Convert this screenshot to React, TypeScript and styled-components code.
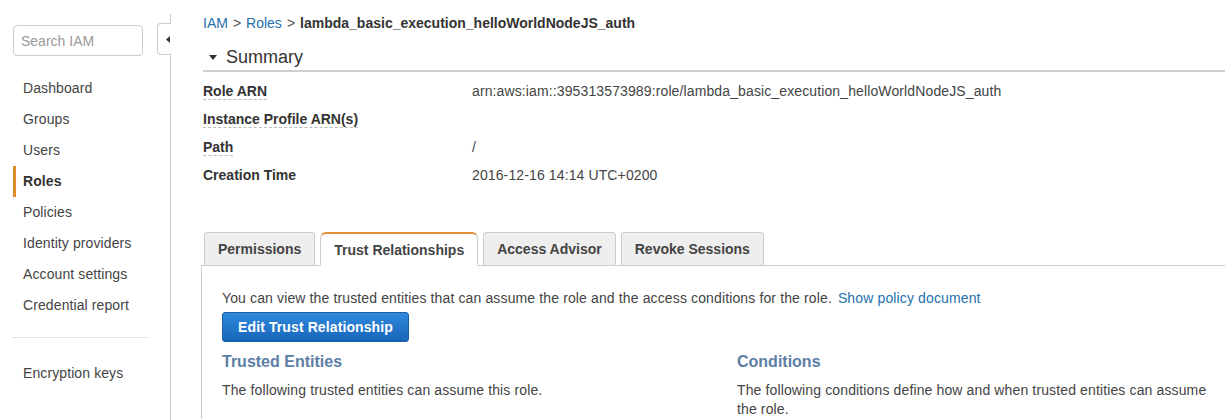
import React from "react";
import styled, { createGlobalStyle } from "styled-components";

const Global = createGlobalStyle`
  html, body { margin: 0; padding: 0; background: #fff; }
  body { font-family: "Liberation Sans", Arial, sans-serif; color: #444; overflow: hidden; }
  * { box-sizing: border-box; }
`;

const Page = styled.div`
  display: flex;
  width: 1225px;
  height: 420px;
  overflow: hidden;
`;

const Sidebar = styled.aside`
  position: relative;
  width: 171px;
  flex: none;
  margin-top: 14px;
  border-right: 1px solid #ccc;
  padding: 11px 0 0 13px;
`;

const Collapse = styled.div`
  position: absolute;
  right: -1px;
  top: 9px;
  width: 14px;
  height: 32px;
  background: #fff;
  border: 1px solid #ccc;
  border-right: none;
  border-radius: 4px 0 0 4px;
  display: flex;
  align-items: center;
  justify-content: flex-end;
  padding-right: 1px;
`;

const Search = styled.input`
  display: block;
  width: 130px;
  height: 31px;
  border: 1px solid #ccc;
  border-radius: 4px;
  padding: 0 7px;
  font-family: "Liberation Sans", Arial, sans-serif;
  font-size: 14px;
  color: #444;
  outline: none;
  &::placeholder { color: #999; }
`;

const NavList = styled.nav`
  display: flex;
  flex-direction: column;
  margin-top: 17px;
`;

const NavItem = styled.div<{ $active?: boolean }>`
  height: 31px;
  line-height: 31px;
  font-size: 14px;
  letter-spacing: 0.1px;
  display: flex;
  align-items: center;
  padding-left: ${(p) => (p.$active ? "7px" : "10px")};
  color: ${(p) => (p.$active ? "#333" : "#444")};
  font-weight: ${(p) => (p.$active ? "bold" : "normal")};
  border-left: ${(p) => (p.$active ? "3px solid #dd8b2b" : "none")};
`;

const ActiveMark = styled.span`
  display: block;
  line-height: 24px;
  margin-top: -1px;
`;

const Separator = styled.hr`
  width: 135px;
  margin: 16px 0 20px 0;
  border: none;
  border-top: 1px dotted #c4c4c4;
`;

const Main = styled.main`
  flex: 1;
  min-width: 0;
  padding: 15px 0 0 32px;
`;

const Breadcrumb = styled.div`
  font-size: 14px;
  line-height: 16px;
  color: #555;
  display: flex;
  gap: 5px;
`;

const Crumb = styled.span`
  color: #2471ad;
`;

const CrumbCurrent = styled.span`
  color: #333;
  font-weight: bold;
`;

const SummaryHead = styled.div`
  margin-top: 16px;
  height: 25px;
  border-bottom: 2px solid #cfcfcf;
  display: flex;
  align-items: center;
  gap: 9px;
  padding-left: 6px;
  padding-bottom: 2px;
  font-size: 18px;
  color: #333;
`;

const Rows = styled.div`
  margin-top: 5px;
  display: flex;
  flex-direction: column;
`;

const Row = styled.div`
  display: grid;
  grid-template-columns: 269px 1fr;
  height: 28px;
  align-items: center;
  font-size: 14px;
`;

const Label = styled.span<{ $plain?: boolean }>`
  justify-self: start;
  font-weight: bold;
  color: #333;
  line-height: 16px;
  border-bottom: ${(p) => (p.$plain ? "1px solid transparent" : "1px dashed #bbb")};
`;

const Value = styled.span`
  color: #444;
  letter-spacing: 0.12px;
`;

const Tabs = styled.div`
  margin-top: 43px;
  display: flex;
  gap: 5px;
  padding-left: 1px;
  position: relative;
  z-index: 1;
  margin-bottom: -1px;
`;

const Tab = styled.div<{ $active?: boolean }>`
  height: 34px;
  padding: 0 13px;
  display: flex;
  align-items: center;
  font-size: 14px;
  font-weight: bold;
  color: #444;
  background: ${(p) => (p.$active ? "#fff" : "#eeeeee")};
  border: 1px solid #ccc;
  border-top: ${(p) => (p.$active ? "2px solid #e0913a" : "1px solid #ccc")};
  border-bottom: ${(p) => (p.$active ? "1px solid #fff" : "1px solid #ccc")};
  border-radius: ${(p) => (p.$active ? "6px 6px 0 0" : "3px 3px 0 0")};
`;

const Panel = styled.section`
  margin-left: -2px;
  border-top: 1px solid #ccc;
  border-left: 1px solid #ccc;
  padding: 23px 0 0 20px;
  font-size: 14px;
  color: #444;
  letter-spacing: 0.13px;
`;

const Intro = styled.p`
  margin: 0;
  line-height: 18px;
`;

const Link = styled.a`
  color: #2471ad;
  text-decoration: none;
  margin-left: 6px;
`;

const Button = styled.button`
  margin-top: 5px;
  height: 30px;
  width: 187px;
  border: 1px solid #1b5fa6;
  border-radius: 3px;
  background: linear-gradient(#3189db, #1766bc);
  color: #fff;
  font-family: "Liberation Sans", Arial, sans-serif;
  font-size: 14px;
  font-weight: bold;
  padding: 0;
  letter-spacing: 0.1px;
`;

const Columns = styled.div`
  margin-top: 10px;
  display: grid;
  grid-template-columns: 515px 478px;
`;

const Column = styled.div``;

const ColTitle = styled.h3`
  margin: 0;
  font-size: 16px;
  line-height: 20px;
  font-weight: bold;
  color: #5c7ea6;
  letter-spacing: 0;
`;

const ColText = styled.p`
  margin: 9px 0 0;
  line-height: 19px;
`;

const CaretLeft = () => (
  <svg width="4" height="7" viewBox="0 0 4 7">
    <polygon points="4,0 4,7 0,3.5" fill="#333" />
  </svg>
);

const CaretDown = () => (
  <svg width="8" height="5" viewBox="0 0 8 5">
    <polygon points="0,0 8,0 4,5" fill="#333" />
  </svg>
);

const nav = [
  "Dashboard",
  "Groups",
  "Users",
  "Roles",
  "Policies",
  "Identity providers",
  "Account settings",
  "Credential report",
];

export default function App() {
  return (
    <>
      <Global />
      <Page>
        <Sidebar>
          <Collapse>
            <CaretLeft />
          </Collapse>
          <Search placeholder="Search IAM" />
          <NavList>
            {nav.map((n) =>
              n === "Roles" ? (
                <NavItem key={n} $active>
                  <ActiveMark>{n}</ActiveMark>
                </NavItem>
              ) : (
                <NavItem key={n}>{n}</NavItem>
              )
            )}
          </NavList>
          <Separator />
          <NavItem>Encryption keys</NavItem>
        </Sidebar>
        <Main>
          <Breadcrumb>
            <Crumb>IAM</Crumb>
            <span>&gt;</span>
            <Crumb>Roles</Crumb>
            <span>&gt;</span>
            <CrumbCurrent>lambda_basic_execution_helloWorldNodeJS_auth</CrumbCurrent>
          </Breadcrumb>
          <SummaryHead>
            <CaretDown />
            <span>Summary</span>
          </SummaryHead>
          <Rows>
            <Row>
              <Label>Role ARN</Label>
              <Value>arn:aws:iam::395313573989:role/lambda_basic_execution_helloWorldNodeJS_auth</Value>
            </Row>
            <Row>
              <Label>Instance Profile ARN(s)</Label>
              <Value />
            </Row>
            <Row>
              <Label>Path</Label>
              <Value>/</Value>
            </Row>
            <Row>
              <Label $plain>Creation Time</Label>
              <Value>2016-12-16 14:14 UTC+0200</Value>
            </Row>
          </Rows>
          <Tabs>
            <Tab>Permissions</Tab>
            <Tab $active>Trust Relationships</Tab>
            <Tab>Access Advisor</Tab>
            <Tab>Revoke Sessions</Tab>
          </Tabs>
          <Panel>
            <Intro>
              You can view the trusted entities that can assume the role and the access conditions for the role.
              <Link href="#">Show policy document</Link>
            </Intro>
            <Button>Edit Trust Relationship</Button>
            <Columns>
              <Column>
                <ColTitle>Trusted Entities</ColTitle>
                <ColText>The following trusted entities can assume this role.</ColText>
              </Column>
              <Column>
                <ColTitle>Conditions</ColTitle>
                <ColText>
                  The following conditions define how and when trusted entities can assume the role.
                </ColText>
              </Column>
            </Columns>
          </Panel>
        </Main>
      </Page>
    </>
  );
}
